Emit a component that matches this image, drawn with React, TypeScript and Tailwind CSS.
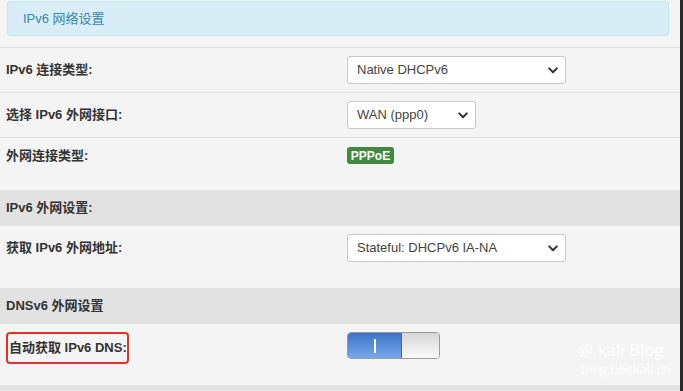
import React from "react";

const font = { fontFamily: '"Liberation Sans", Arial, "Noto Sans CJK SC", sans-serif' };

function Chevron() {
  return (
    <svg width="10" height="7" viewBox="0 0 10 7" className="shrink-0">
      <path d="M1.2 1.4 L5 5.2 L8.8 1.4" fill="none" stroke="#333" strokeWidth="2" strokeLinecap="round" strokeLinejoin="round" />
    </svg>
  );
}

function Select({ text, width }: { text: string; width: string }) {
  return (
    <div
      className={`${width} h-[28px] bg-white border border-[#c8c8c8] rounded-[3px] flex items-center justify-between pl-[9px] pr-[7px] text-[13px] text-[#444]`}
    >
      <span>{text}</span>
      <Chevron />
    </div>
  );
}

function Row({
  label,
  height,
  border = false,
  children,
}: {
  label: React.ReactNode;
  height: string;
  border?: boolean;
  children?: React.ReactNode;
}) {
  return (
    <div className={`flex items-start pt-[8px] ${height} ${border ? "border-b border-[#dcdcdc]" : ""}`}>
      <div className="w-[347px] shrink-0 pl-[6px] h-[28px] flex items-center text-[13px] font-bold text-[#333]">
        {label}
      </div>
      <div className="flex-1">{children}</div>
    </div>
  );
}

function Band({ label, height }: { label: string; height: string }) {
  return (
    <div className={`${height} bg-[#e2e2e2] flex items-center pl-[6px] text-[13px] font-bold text-[#333]`}>
      {label}
    </div>
  );
}

export default function App() {
  return (
    <div className="w-[683px] h-[391px] overflow-hidden flex bg-[#f4f4f4]" style={font}>
      <div className="w-[680px] flex flex-col relative">
        <div className="h-[48px] border-b border-[#dcdcdc] pt-[1px] pl-[7px] pr-[11px]">
          <div className="h-[35px] bg-[#d9edf7] border border-[#bce8f1] rounded-[3px] flex items-center pl-[15px] text-[13px] text-[#3a87ad]">
            IPv6 网络设置
          </div>
        </div>
        <Row label="IPv6 连接类型:" height="h-[45px]" border>
          <Select text="Native DHCPv6" width="w-[219px]" />
        </Row>
        <Row label="选择 IPv6 外网接口:" height="h-[45px]" border>
          <Select text="WAN (ppp0)" width="w-[129px]" />
        </Row>
        <div className="flex items-start pt-[9px] h-[52px]">
          <div className="w-[347px] shrink-0 pl-[6px] h-[17px] flex items-center text-[13px] font-bold text-[#333]">
            外网连接类型:
          </div>
          <span className="h-[17px] w-[47px] bg-[#3f8a3f] rounded-[3px] text-white text-[12px] font-bold flex items-center justify-center">
            PPPoE
          </span>
        </div>
        <Band label="IPv6 外网设置:" height="h-[36px]" />
        <Row label="获取 IPv6 外网地址:" height="h-[62px]">
          <Select text="Stateful: DHCPv6 IA-NA" width="w-[219px]" />
        </Row>
        <Band label="DNSv6 外网设置" height="h-[36px]" />
        <div className="flex items-start pt-[8px] h-[61px]">
          <div className="w-[347px] shrink-0 pl-[6px] h-[28px] flex items-center">
            <div className="h-[32px] w-[123px] mt-[4px] border-2 border-[#e8302a] rounded-[4px] flex items-center pl-[1px] text-[13px] font-bold text-[#333]">
              自动获取 IPv6 DNS:
            </div>
          </div>
          <div className="h-[27px] w-[93px] flex rounded-[4px] border border-[#9a9a9a] overflow-hidden">
            <div className="w-[54px] h-full bg-gradient-to-b from-[#3b74c6] to-[#78a8ec] border-r border-[#3a6aae] flex items-center justify-center">
              <div className="w-[2px] h-[14px] bg-white" />
            </div>
            <div className="flex-1 h-full bg-gradient-to-b from-[#d6d6d6] to-[#fbfbfb]" />
          </div>
        </div>
        <div className="flex-1 bg-[#e2e2e2]" />
        <div
          className="absolute left-[578px] top-[340px] flex flex-col items-start text-white/90"
          style={{ fontFamily: '"Open Sans", "Noto Sans", sans-serif' }}
        >
          <span className="text-[17px] leading-[20px]">@ kali Blog</span>
          <span className="text-[13px] leading-[16px] mt-[1px] ml-[3px]">blog.bbskali.cn</span>
        </div>
      </div>
      <div className="w-[3px] bg-[#2a2a2a]" />
    </div>
  );
}
